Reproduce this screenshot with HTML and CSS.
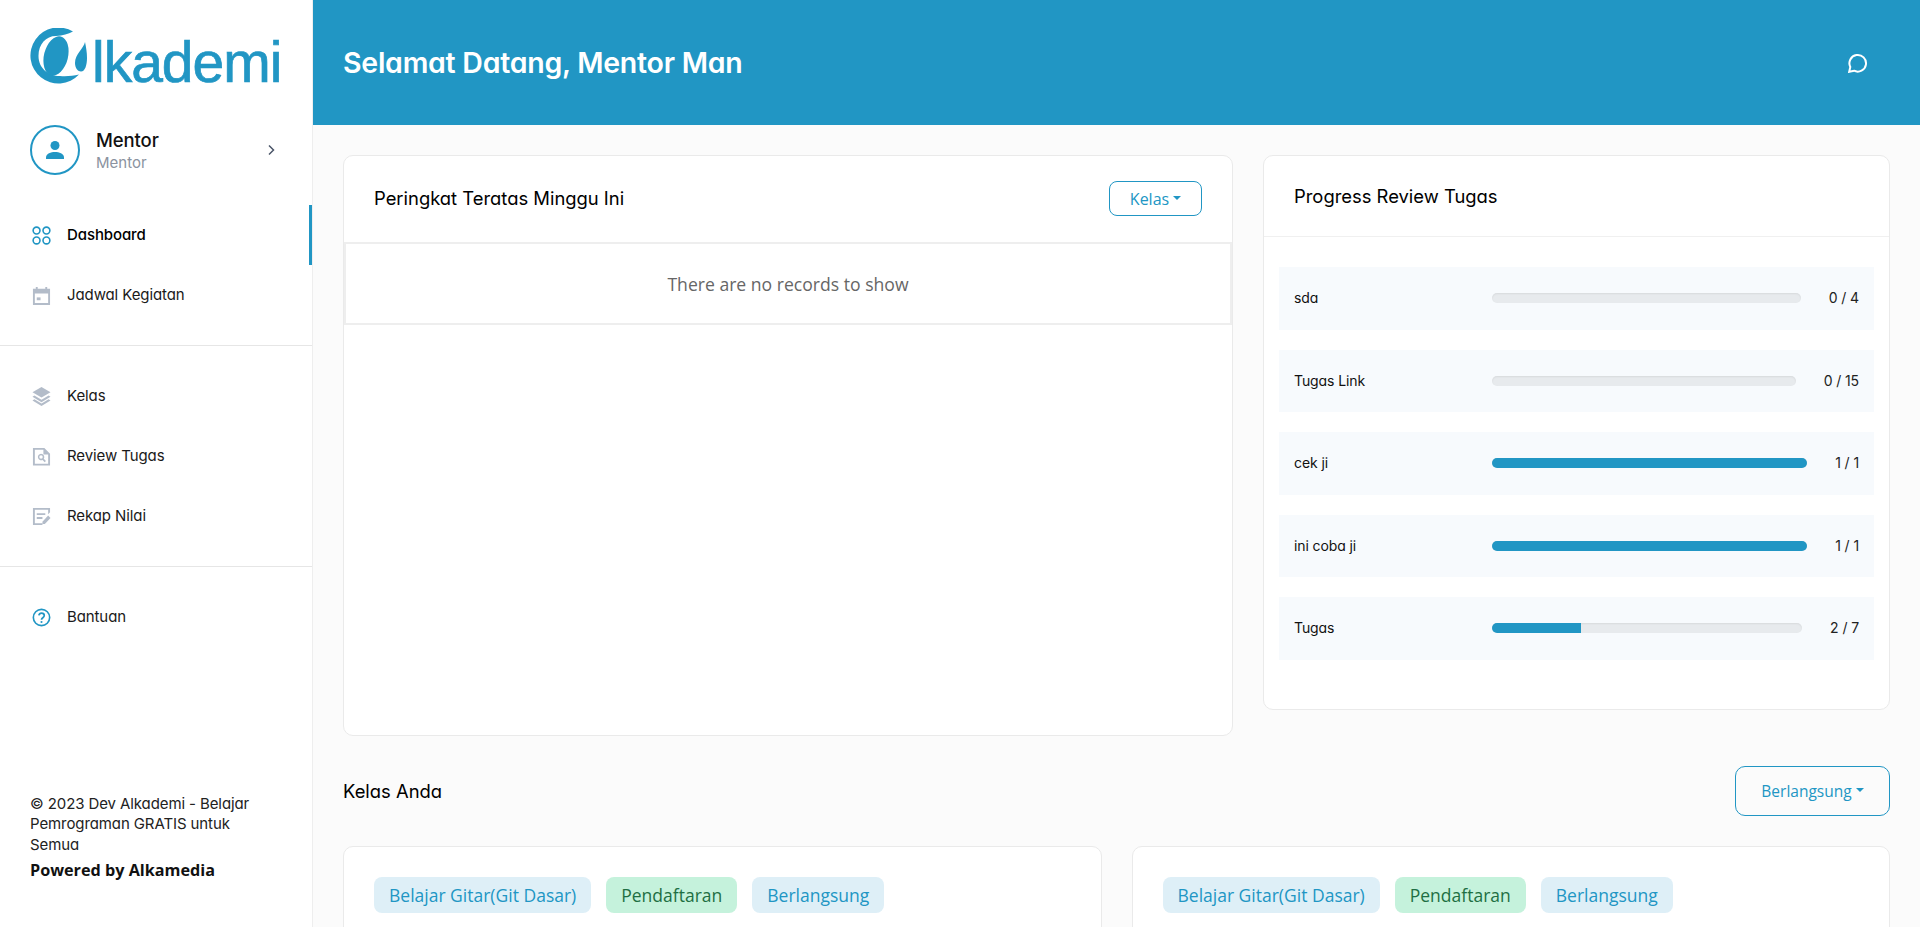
FILE: index.html
```html
<!DOCTYPE html>
<html lang="id">
<head>
<meta charset="utf-8">
<title>Alkademi</title>
<link rel="stylesheet" href="styles.css">
</head>
<body>
<div class="app">
  <aside class="sidebar">
    <div class="logo">
      <svg class="logo-mark" viewBox="0 0 60 60" aria-hidden="true">
        <path class="logo-fill" d="M43 3.600A28 28 0 1 0 49 46.500C43 48 36 48.500 30 48C18 48 8.500 40 8.500 28C8.500 16 16 8 26 8C33 8 38 6 43 3.600Z"/>
        <ellipse class="logo-fill" cx="26" cy="28" rx="12" ry="20" transform="rotate(14 26 28)"/>
        <path class="logo-fill" d="M55 14C54 20 45 26 45 35C45 40 48 43.500 51 43.500C55 43.500 57 37 57 30C57 24 56 19 55 14Z"/>
      </svg>
      <span class="logo-text">lkademi</span>
    </div>
    <div class="profile">
      <div class="avatar">
        <svg viewBox="0 0 24 24" aria-hidden="true"><circle cx="12" cy="7.500" r="4.500"/><path d="M3 21v-1.500C3 15.500 8 14 12 14s9 1.500 9 5.500V21Z"/></svg>
      </div>
      <div class="profile-text">
        <div class="profile-name">Mentor</div>
        <div class="profile-role">Mentor</div>
      </div>
      <svg class="chevron" viewBox="0 0 12 12" aria-hidden="true"><path d="M4 1.500 8.500 6 4 10.500"/></svg>
    </div>
    <nav class="nav nav-first">
      <a class="nav-item active">
        <svg class="icon line blue" viewBox="0 0 20 20"><circle cx="4.800" cy="4.800" r="3.600"/><circle cx="15.200" cy="4.800" r="3.600"/><circle cx="4.800" cy="15.200" r="3.600"/><circle cx="15.200" cy="15.200" r="3.600"/></svg>
        <span>Dashboard</span>
      </a>
      <a class="nav-item">
        <svg class="icon gray" viewBox="0 0 20 20"><path fill-rule="evenodd" d="M1 3h3V1h2v2h8V1h2v2h3v17H1ZM3 8v10h14V8Z"/><rect x="5" y="12" width="4" height="3"/></svg>
        <span>Jadwal Kegiatan</span>
      </a>
    </nav>
    <nav class="nav nav-mid">
      <a class="nav-item">
        <svg class="icon gray" viewBox="0 0 20 20"><path d="M10 0 19.500 5.500 10 11 .5 5.500Z"/><path d="m2.500 9 7.500 4.300L17.500 9l2 1.300L10 16 .5 10.300Z"/><path d="m2.500 13 7.500 4.300 7.500-4.300 2 1.300L10 20 .5 14.300Z"/></svg>
        <span>Kelas</span>
      </a>
      <a class="nav-item">
        <svg class="icon gray" viewBox="0 0 20 20"><path fill-rule="evenodd" d="M1 1h12l6 6v12.500H1ZM3 3v14.500h14V8h-5V3Z"/><path fill-rule="evenodd" d="M9.500 7a3.500 3.500 0 0 1 2.900 5.400l2.300 2.300-1.300 1.300-2.300-2.300A3.500 3.500 0 1 1 9.500 7Zm0 1.700a1.800 1.800 0 1 0 0 3.600 1.800 1.800 0 0 0 0-3.600Z"/></svg>
        <span>Review Tugas</span>
      </a>
      <a class="nav-item">
        <svg class="icon gray" viewBox="0 0 20 20"><path d="M1 1h18v4.500l-2 2V3H3v14h8v2H1Z"/><path d="M5 6.500h9v2H5ZM5 10.500h6v2H5Z"/><path d="m17 9 2.500 2.500-6 6.500H11v-2.500Z"/></svg>
        <span>Rekap Nilai</span>
      </a>
    </nav>
    <nav class="nav nav-last">
      <a class="nav-item">
        <svg class="icon line blue" viewBox="0 0 20 20"><circle cx="10" cy="10" r="8.600"/><path class="q" d="M7.200 7.800A2.900 2.900 0 0 1 10 5.500c1.700 0 2.900 1.100 2.900 2.500 0 2.200-2.900 2.300-2.900 4.300"/><circle class="dot" cx="10" cy="14.800" r="1.100"/></svg>
        <span>Bantuan</span>
      </a>
    </nav>
    <footer class="side-foot">
      <p class="copy">© 2023 Dev Alkademi - Belajar Pemrograman GRATIS untuk Semua</p>
      <p class="powered">Powered by Alkamedia</p>
    </footer>
  </aside>

  <div class="content">
    <header class="topbar">
      <h1>Selamat Datang, Mentor Man</h1>
      <svg class="chat" viewBox="0 0 20 20" aria-hidden="true"><path d="M1.200 18.800 2.300 14A8.300 8.300 0 1 1 6 17.700Z"/></svg>
    </header>
    <main class="main">
      <div class="top-grid">
        <section class="card rank">
          <div class="rank-head">
            <h2>Peringkat Teratas Minggu Ini</h2>
            <button class="btn btn-sm">Kelas<i class="caret"></i></button>
          </div>
          <div class="empty">There are no records to show</div>
        </section>
        <section class="card progress">
          <h2 class="progress-head">Progress Review Tugas</h2>
          <div class="rows">
            <div class="row"><span class="row-label">sda</span><div class="bar"><div class="fill" style="width:0%"></div></div><span class="row-val">0 / 4</span></div>
            <div class="row"><span class="row-label">Tugas Link</span><div class="bar"><div class="fill" style="width:0%"></div></div><span class="row-val">0 / 15</span></div>
            <div class="row"><span class="row-label">cek ji</span><div class="bar"><div class="fill" style="width:100%"></div></div><span class="row-val">1 / 1</span></div>
            <div class="row"><span class="row-label">ini coba ji</span><div class="bar"><div class="fill" style="width:100%"></div></div><span class="row-val">1 / 1</span></div>
            <div class="row"><span class="row-label">Tugas</span><div class="bar"><div class="fill" style="width:28.570%"></div></div><span class="row-val">2 / 7</span></div>
          </div>
        </section>
      </div>
      <div class="section-head">
        <h2>Kelas Anda</h2>
        <button class="btn btn-lg">Berlangsung<i class="caret"></i></button>
      </div>
      <div class="class-grid">
        <article class="card class-card">
          <span class="badge blue-b">Belajar Gitar(Git Dasar)</span>
          <span class="badge green-b">Pendaftaran</span>
          <span class="badge blue-b">Berlangsung</span>
        </article>
        <article class="card class-card">
          <span class="badge blue-b">Belajar Gitar(Git Dasar)</span>
          <span class="badge green-b">Pendaftaran</span>
          <span class="badge blue-b">Berlangsung</span>
        </article>
      </div>
    </main>
  </div>
</div>
</body>
</html>
```
FILE: styles.css
```css
* { box-sizing: border-box; }
html, body { margin: 0; height: 100%; overflow: hidden; }
body {
  background: #fbfbfb;
  color: #111;
  font-family: Inter, "Noto Sans", sans-serif;
  font-feature-settings: "cv11" 1;
}
h1, h2, p { margin: 0; font-weight: 400; }
.app { display: flex; height: 927px; overflow: hidden; }

/* sidebar */
.sidebar {
  width: 313px;
  flex: none;
  display: flex;
  flex-direction: column;
  background: #fff;
  border-right: 1px solid #eee;
}
.logo { display: flex; align-items: center; height: 56px; margin: 30px 0 0 30px; }
.logo-mark { width: 60px; height: 60px; flex: none; margin-right: 2px; }
.logo-fill { fill: #2196c4; }
.logo-text {
  font-family: "Liberation Sans", sans-serif;
  font-feature-settings: normal;
  font-size: 57px;
  line-height: 56px;
  letter-spacing: -1px;
  color: #2196c4;
  -webkit-text-stroke: .7px #2196c4;
  margin-top: 7px;
}
.profile { display: flex; align-items: center; height: 50px; margin: 39px 0 0 30px; }
.avatar {
  width: 50px; height: 50px; flex: none;
  border: 2px solid #2196c4; border-radius: 50%;
  display: flex; align-items: center; justify-content: center;
}
.avatar svg { width: 24px; height: 24px; fill: #2196c4; }
.profile-text { margin-left: 16px; width: 169px; padding-top: 1px; }
.profile-name { font-size: 18.500px; line-height: 22px; font-weight: 500; letter-spacing: -.1px; }
.profile-role { font-size: 15px; line-height: 20px; color: #8b93a0; margin-top: 2px; }
.chevron { width: 12px; height: 12px; fill: none; stroke: #4a5568; stroke-width: 1.500; }
.nav { display: flex; flex-direction: column; }
.nav-first { margin-top: 30px; padding-bottom: 20px; border-bottom: 1px solid #e6e6e6; }
.nav-mid { padding: 20px 0; border-bottom: 1px solid #e6e6e6; }
.nav-last { padding-top: 20px; }
.nav-item {
  display: flex; align-items: center; height: 60px; padding-left: 32px;
  font-size: 15px; letter-spacing: -.1px; color: #1a1a1a; position: relative;
}
.nav-item span { margin-top: -1px; }
.nav-item.active { font-weight: 500; color: #000; }
.nav-item.active::after {
  content: ""; position: absolute; right: 0; top: 0; bottom: 0; width: 3px; background: #2196c4;
}
.icon { width: 19px; height: 19px; flex: none; margin-right: 16px; }
.gray { fill: #b3bcc9; }
.line { fill: none; stroke-width: 1.700; }
.blue { stroke: #2196c4; }
.q { stroke-width: 1.800; }
.dot { fill: #2196c4; stroke: none; }
.side-foot { margin: auto 40px 46px 30px; font-size: 15px; }
.copy { line-height: 20.500px; color: #222; letter-spacing: -.1px; }
.powered {
  font-family: "Open Sans", sans-serif; font-weight: 700; font-size: 16.200px;
  line-height: 22px; margin-top: 4px; color: #111;
}

/* content */
.content { flex: 1; min-width: 0; display: flex; flex-direction: column; }
.topbar {
  height: 125px; flex: none; background: #2196c4; color: #fff;
  display: flex; align-items: center; justify-content: space-between;
  padding: 0 52px 0 30px;
}
.topbar h1 { font-size: 28.500px; font-weight: 600; letter-spacing: -.25px; margin-top: -1px; }
.chat { width: 20px; height: 20px; fill: none; stroke: #fff; stroke-width: 2; }
.main { padding: 30px; flex: 1; }
.card { background: #fff; border: 1px solid #eaeaea; border-radius: 10px; }
.top-grid { display: grid; grid-template-columns: 890fr 627fr; gap: 30px; align-items: start; }
.rank { height: 581px; overflow: hidden; }
.rank-head { height: 86px; display: flex; align-items: center; justify-content: space-between; padding: 0 30px 1px; }
.rank-head h2 { margin-top: -1px; }
h2 { font-size: 18.400px; color: #000; }
.btn {
  font-family: "Open Sans", sans-serif; color: #2196c4; background: #fff;
  border: 1px solid #2196c4; border-radius: 8px; display: flex; align-items: center; justify-content: center;
  padding: 0;
}
.btn-sm { width: 93px; height: 35px; font-size: 16px; }
.btn-lg { width: 155px; height: 50px; font-size: 15.500px; background: none; border-radius: 10px; }
.caret {
  width: 0; height: 0; margin: -2px 0 0 4px;
  border-left: 4px solid transparent; border-right: 4px solid transparent; border-top: 4px solid #2196c4;
}
.empty {
  height: 83px; display: flex; align-items: center; justify-content: center;
  border: 2px solid #eee; font-family: "Open Sans", sans-serif; font-size: 17.600px; color: #666;
}
.progress { height: 555px; }
.progress-head { height: 81px; display: flex; align-items: center; padding: 0 30px; border-bottom: 1px solid #f0f0f0; }
.rows { display: flex; flex-direction: column; gap: 20px; padding: 30px 15px; }
.row {
  height: 62.500px; display: flex; align-items: center; background: #f7fafd; padding: 0 15px;
  font-size: 14px; letter-spacing: -.1px;
}
.row-label { width: 198px; flex: none; margin-top: -1px; }
.bar {
  flex: 1; height: 10px; border-radius: 5px; background: #e7eaed; overflow: hidden;
  box-shadow: inset 0 1px 2px rgba(0, 0, 0, .07);
}
.fill { height: 100%; background: #2196c4; }
.row-val { margin-left: 28px; flex: none; color: #222; margin-top: -1px; }
.section-head { display: flex; align-items: center; justify-content: space-between; margin-top: 30px; height: 50px; }
.class-grid { display: grid; grid-template-columns: 1fr 1fr; gap: 30px; margin-top: 30px; }
.class-card { display: flex; gap: 15px; padding: 30px; height: 260px; align-items: flex-start; }
.badge {
  height: 36px; padding: 0 15px; border-radius: 8px; display: flex; align-items: center;
  font-family: "Open Sans", sans-serif; font-size: 17.500px;
}
.blue-b { background: #deeff7; color: #2196c4; }
.green-b { background: #c5f2dc; color: #1e6f43; }
```
